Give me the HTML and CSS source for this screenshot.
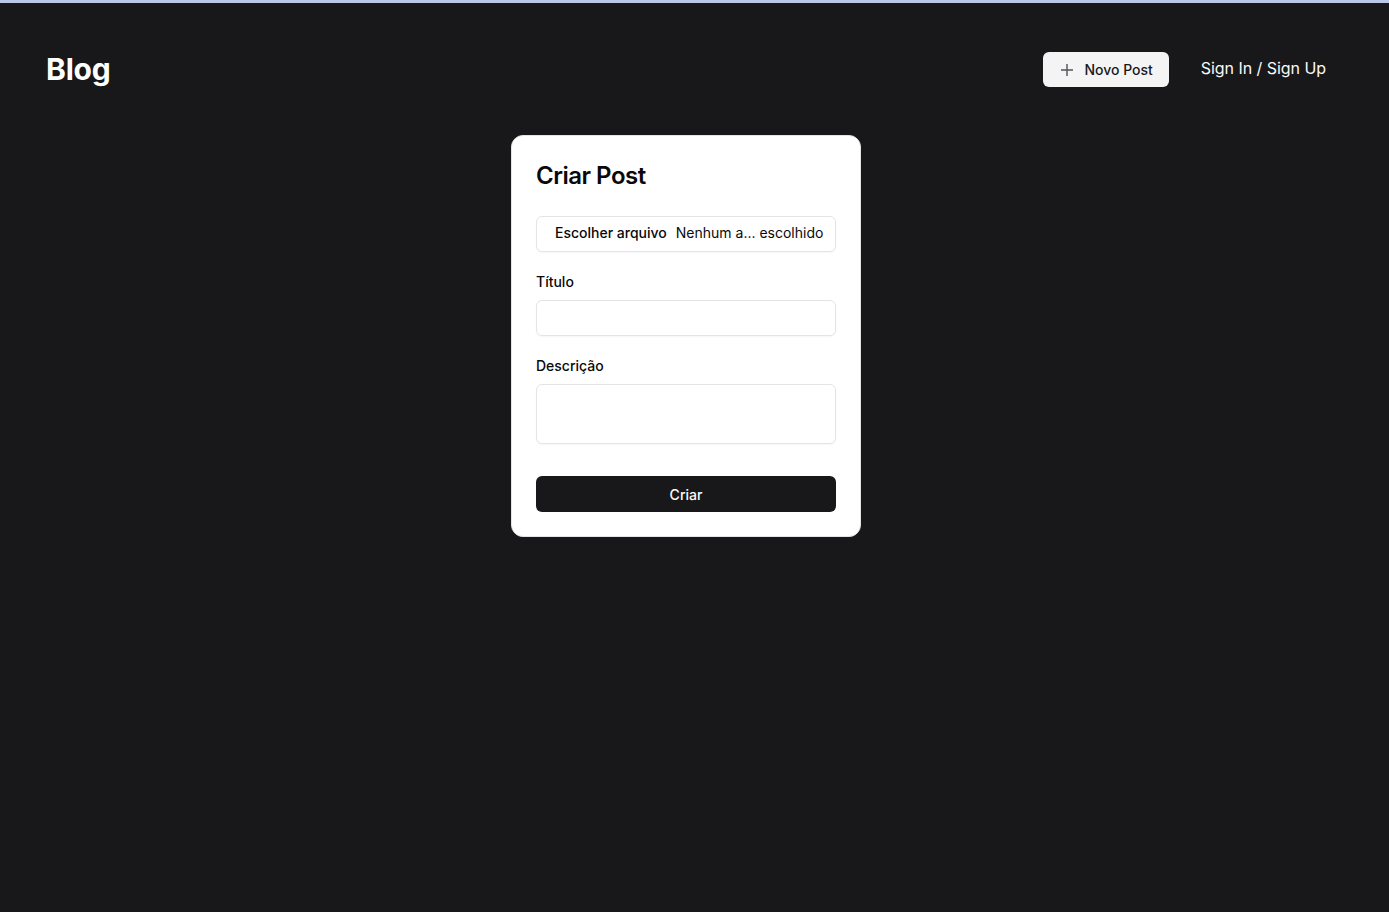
FILE: index.html
```html
<!DOCTYPE html>
<html lang="pt-BR">
<head>
<meta charset="utf-8">
<title>Blog</title>
<link rel="stylesheet" href="styles.css">
</head>
<body>
<header class="header">
  <a class="brand" href="#">Blog</a>
  <nav class="nav">
    <button class="btn-new" type="button">
      <svg class="icon-plus" width="12" height="12" viewBox="0 0 12 12" aria-hidden="true"><path d="M0 6h12M6 0v12" stroke="currentColor" stroke-width="1.4" fill="none"/></svg>
      <span>Novo Post</span>
    </button>
    <a class="nav-link" href="#">Sign In / Sign Up</a>
  </nav>
</header>
<main class="main">
  <form class="card">
    <h1 class="card-title">Criar Post</h1>
    <div class="file-input">
      <span class="file-btn">Escolher arquivo</span>
      <span class="file-name">Nenhum a... escolhido</span>
    </div>
    <div class="field">
      <label class="label">Título</label>
      <div class="input"></div>
    </div>
    <div class="field">
      <label class="label">Descrição</label>
      <div class="input textarea"></div>
    </div>
    <button class="btn-submit" type="button">Criar</button>
  </form>
</main>
</body>
</html>
```
FILE: styles.css
```css
* { box-sizing: border-box; }
html, body { margin: 0; padding: 0; }
body {
  background: #18181b;
  border-top: 3px solid #b9c8e6;
  min-height: 912px;
  font-family: Inter, "Noto Sans", sans-serif;
  color: #09090b;
}
.header {
  display: flex;
  align-items: center;
  justify-content: space-between;
  padding: 49px 63px 0 46px;
  height: 84px;
}
.brand {
  color: #fff;
  text-decoration: none;
  font-size: 30px;
  font-weight: 700;
  line-height: 36px;
  letter-spacing: -0.2px;
  margin-top: -1px;
}
.nav {
  display: flex;
  align-items: center;
  gap: 32px;
}
.btn-new {
  display: flex;
  align-items: center;
  gap: 11px;
  height: 35px;
  padding: 0 16px 0 18px;
  background: #f4f4f5;
  border: 0;
  border-radius: 6px;
  font-family: inherit;
  font-size: 14px;
  font-weight: 500;
  color: #18181b;
}
.icon-plus { color: #52525b; }
.nav-link {
  color: #fafafa;
  text-decoration: none;
  font-size: 16px;
  line-height: 24px;
  letter-spacing: -0.05px;
  margin-top: -3px;
}
.main {
  display: flex;
  justify-content: center;
  padding: 48px 17px 0 0;
}
.card {
  width: 350px;
  background: #fff;
  border: 1px solid #e4e4e7;
  border-radius: 12px;
  padding: 24px;
  display: flex;
  flex-direction: column;
}
.card-title {
  margin: 0 0 24px;
  font-size: 24px;
  line-height: 32px;
  font-weight: 600;
  letter-spacing: -0.5px;
}
.file-input {
  height: 36px;
  border: 1px solid #e4e4e7;
  border-radius: 6px;
  display: flex;
  align-items: center;
  padding: 0 0 3px 18px;
  font-size: 14px;
  white-space: nowrap;
  overflow: hidden;
  box-shadow: 0 1px 2px rgba(0,0,0,0.04);
}
.file-btn { font-weight: 500; margin-right: 9px; }
.file-name { font-weight: 400; }
.field {
  display: flex;
  flex-direction: column;
  gap: 8px;
  margin-top: 20px;
}
.label {
  font-size: 14px;
  line-height: 20px;
  font-weight: 500;
}
.input {
  height: 36px;
  border: 1px solid #e4e4e7;
  border-radius: 6px;
  box-shadow: 0 1px 2px rgba(0,0,0,0.04);
}
.textarea { height: 60px; }
.btn-submit {
  margin-top: 32px;
  height: 36px;
  border: 0;
  border-radius: 6px;
  background: #18181b;
  color: #fafafa;
  font-family: inherit;
  font-size: 14px;
  font-weight: 500;
}
```
